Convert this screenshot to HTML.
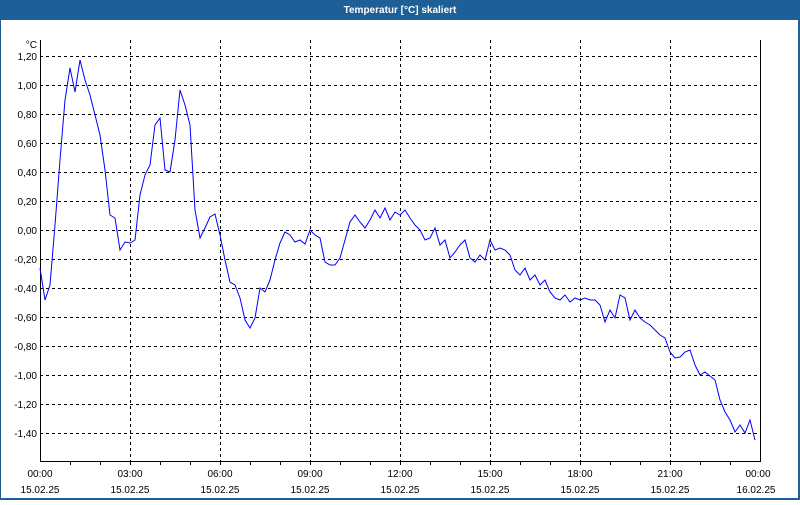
<!DOCTYPE html>
<html><head><style>
body{margin:0;width:800px;height:500px;overflow:hidden;background:#fff;font-family:"Liberation Sans",sans-serif}
</style></head><body>
<svg width="800" height="500" xmlns="http://www.w3.org/2000/svg" font-family="Liberation Sans, sans-serif" font-size="10">
<rect x="0" y="0" width="800" height="500" fill="#1d5f96"/>
<rect x="1" y="20" width="797" height="478" fill="#fff"/>
<text x="400" y="13" fill="#fff" font-weight="bold" font-size="10" text-anchor="middle">Temperatur [°C] skaliert</text>
<g stroke="#000" stroke-dasharray="3,3" stroke-width="1">
<path d="M40 56.5H760M40 85.5H760M40 114.5H760M40 143.5H760M40 172.5H760M40 201.5H760M40 230.5H760M40 259.5H760M40 288.5H760M40 317.5H760M40 346.5H760M40 375.5H760M40 404.5H760M40 433.5H760"/>
<path d="M130.5 40V462M220.5 40V462M310.5 40V462M400.5 40V462M490.5 40V462M580.5 40V462M670.5 40V462"/>
</g>
<g stroke="#000" fill="none">
<path d="M40.5 40V461.5H760.5V40"/>
<path d="M70.5 461V465M100.5 461V465M130.5 461V465M160.5 461V465M190.5 461V465M220.5 461V465M250.5 461V465M280.5 461V465M310.5 461V465M340.5 461V465M370.5 461V465M400.5 461V465M430.5 461V465M460.5 461V465M490.5 461V465M520.5 461V465M550.5 461V465M580.5 461V465M610.5 461V465M640.5 461V465M670.5 461V465M700.5 461V465M730.5 461V465"/>
</g>
<g fill="#000" text-anchor="end">
<text x="37" y="48">°C</text>
<text x="37" y="60">1,20</text><text x="37" y="89">1,00</text><text x="37" y="118">0,80</text><text x="37" y="147">0,60</text><text x="37" y="176">0,40</text><text x="37" y="205">0,20</text><text x="37" y="234">0,00</text><text x="37" y="263">-0,20</text><text x="37" y="292">-0,40</text><text x="37" y="321">-0,60</text><text x="37" y="350">-0,80</text><text x="37" y="379">-1,00</text><text x="37" y="408">-1,20</text><text x="37" y="437">-1,40</text>
</g>
<g fill="#000" text-anchor="middle">
<text x="40" y="477">00:00</text><text x="130" y="477">03:00</text><text x="220" y="477">06:00</text><text x="310" y="477">09:00</text><text x="400" y="477">12:00</text><text x="490" y="477">15:00</text><text x="580" y="477">18:00</text><text x="670" y="477">21:00</text><text x="758" y="477">00:00</text>
<text x="40" y="493">15.02.25</text><text x="130" y="493">15.02.25</text><text x="220" y="493">15.02.25</text><text x="310" y="493">15.02.25</text><text x="400" y="493">15.02.25</text><text x="490" y="493">15.02.25</text><text x="580" y="493">15.02.25</text><text x="670" y="493">15.02.25</text><text x="756" y="493">16.02.25</text>
</g>
<polyline fill="none" stroke="#0000ff" stroke-width="1" points="40,268 45,300 50,285 55,225 60,160 65,100 70,68 75,92 80,60 85,80 90,95 95,115 100,135 105,170 110,215 115,218 120,250 125,242 130,243 135,240 140,195 145,175 150,165 155,125 160,118 165,170 170,172 175,140 180,90 185,105 190,125 195,210 200,238 205,228 210,217 215,214 220,235 225,260 230,282 235,285 240,298 245,320 250,328 255,318 260,288 265,292 270,280 275,260 280,243 285,232 290,235 295,242 300,240 305,244 310,230 315,235 320,238 325,262 330,265 335,265 340,258 345,240 350,222 355,215 360,222 365,228 370,220 375,210 380,218 385,208 390,220 395,212 400,215 405,210 410,218 415,225 420,230 425,240 430,238 435,228 440,245 445,240 450,258 455,252 460,245 465,240 470,258 475,262 480,255 485,260 490,240 495,250 500,248 505,250 510,255 515,270 520,275 525,268 530,280 535,275 540,285 545,280 550,292 555,298 560,300 565,295 570,302 575,298 580,300 585,298 590,300 595,300 600,305 605,322 610,310 615,318 620,295 625,298 630,320 635,310 640,318 645,322 650,325 655,330 660,335 665,338 670,352 675,358 680,357 685,352 690,350 695,365 700,375 705,372 710,376 715,380 720,400 725,412 730,420 735,432 740,425 745,433 750,420 755,440"/>
</svg>
</body></html>
